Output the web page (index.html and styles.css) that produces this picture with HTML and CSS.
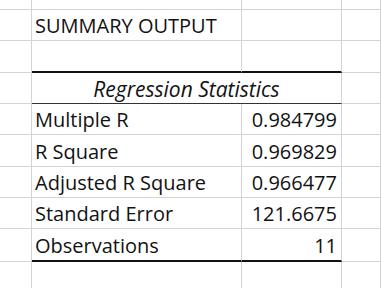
FILE: index.html
```html
<!DOCTYPE html>
<html>
<head>
<meta charset="utf-8">
<link rel="stylesheet" href="styles.css">
</head>
<body>
<div class="sheet">
  <div class="c"></div><div class="c"></div><div class="c"></div><div class="c"></div>

  <div class="c"></div><div class="c txt">SUMMARY OUTPUT</div><div class="c"></div><div class="c"></div>

  <div class="c"></div><div class="c thick"></div><div class="c thick"></div><div class="c"></div>

  <div class="c"></div><div class="c head span2">Regression Statistics</div><div class="c"></div>

  <div class="c"></div><div class="c txt">Multiple R</div><div class="c num">0.984799</div><div class="c"></div>

  <div class="c"></div><div class="c txt">R Square</div><div class="c num">0.969829</div><div class="c"></div>

  <div class="c"></div><div class="c txt">Adjusted R Square</div><div class="c num">0.966477</div><div class="c"></div>

  <div class="c"></div><div class="c txt">Standard Error</div><div class="c num">121.6675</div><div class="c"></div>

  <div class="c"></div><div class="c txt thick">Observations</div><div class="c num thick">11</div><div class="c"></div>

  <div class="c"></div><div class="c"></div><div class="c"></div><div class="c"></div>
</div>
</body>
</html>
```

FILE: styles.css
```css
html, body {
  margin: 0;
  padding: 0;
  background: #ffffff;
}
body {
  width: 381px;
  height: 288px;
  overflow: hidden;
}
.sheet {
  display: grid;
  grid-template-columns: 32px 210px 100px 39px;
  grid-template-rows: 10px 31px 32px 31px 31px 32px 31px 31px 33px 27px;
  font-family: "Open Sans", "Noto Sans", sans-serif;
  font-size: 20px;
  font-weight: 500;
  color: #121212;
}
.c {
  box-sizing: border-box;
  border-right: 1px solid #d3d3d3;
  border-bottom: 1px solid #d3d3d3;
  display: flex;
  align-items: center;
  padding-top: 1px;
  white-space: nowrap;
  overflow: hidden;
  background: #fff;
}
.txt {
  padding-left: 3px;
}
.num {
  justify-content: flex-end;
  padding-right: 4px;
}
.thick {
  border-bottom: 2px solid #111;
}
.head {
  grid-column: span 2;
  justify-content: center;
  font-style: italic;
  font-size: 21px;
  border-bottom: 1px solid #333;
}
```
